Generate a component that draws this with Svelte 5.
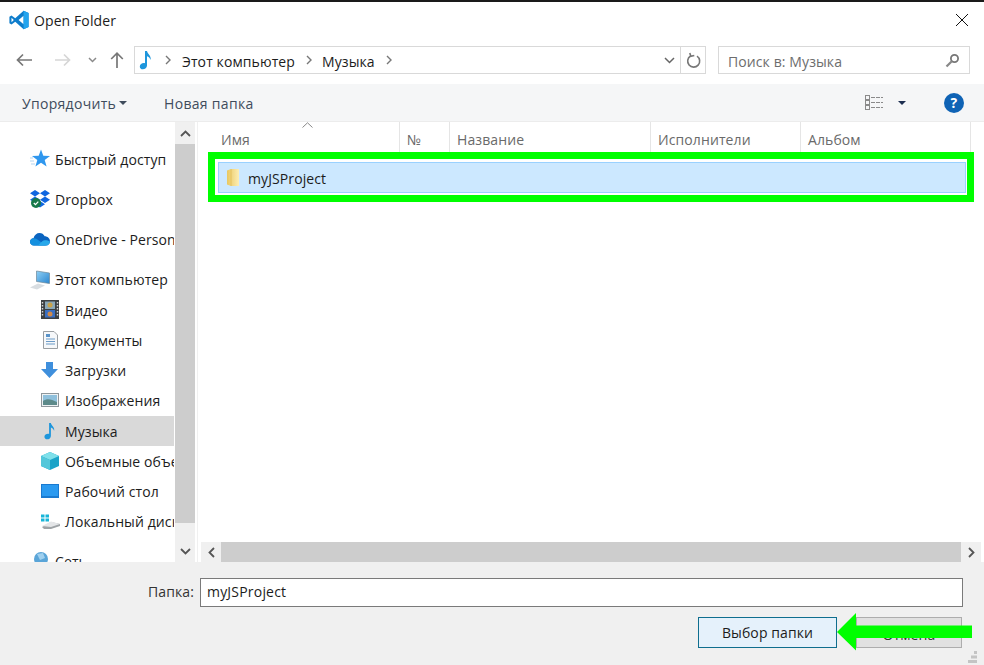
<script>
  const cols = [
    { name: 'Имя', w: 202 },
    { name: '№', w: 50 },
    { name: 'Название', w: 201 },
    { name: 'Исполнители', w: 150 },
    { name: 'Альбом', w: 170 }
  ];
</script>

{#snippet note(s)}
  <svg width={s} height={s} viewBox="0 0 20 20"><path d="M9 1h2c.4 3 4.6 4.6 3.6 9-.5-2-2-3.4-3.6-3.8V15.500c0 2.200-2 3.800-4.200 3.800C5 19.300 3.800 18 3.800 16.400c0-2 2-3.400 4-3.400.500 0 .900.100 1.200.200z" fill="#1e96dc"/></svg>
{/snippet}

<div class="window">
  <header class="title">
    <svg class="logo" width="20" height="20" viewBox="0 0 24 24"><path d="M17.500 0.800 23.500 3.700V20.300L17.500 23.200 7.500 14 3 17.500 0.500 16V8L3 6.500 7.500 10zM17.500 6.800 11.500 12 17.500 17.200z" fill="#0e7ccb"/><path d="M17.500 0.800 23.500 3.700V20.300L17.500 23.200z" fill="#23a4ee"/><path d="M3 9.300V14.700L5.800 12z" fill="#fff"/></svg>
    <span class="title-text">Open Folder</span>
    <svg class="close" width="14" height="14" viewBox="0 0 14 14"><path d="M1 1 13 13M13 1 1 13" stroke="#111" stroke-width="1" fill="none"/></svg>
  </header>

  <nav class="nav">
    <svg class="n-back" width="16" height="14" viewBox="0 0 16 14"><path d="M7 1.500 1.500 7 7 12.500M1.500 7H16" stroke="#777" stroke-width="1.700" fill="none"/></svg>
    <svg class="n-fwd" width="16" height="14" viewBox="0 0 16 14"><path d="M9 1.500 14.500 7 9 12.500M14.500 7H0" stroke="#d6d6d6" stroke-width="1.700" fill="none"/></svg>
    <svg class="n-down" width="9" height="6" viewBox="0 0 9 6"><path d="M1 1 4.500 4.500 8 1" stroke="#8a8a8a" stroke-width="1.500" fill="none"/></svg>
    <svg class="n-up" width="14" height="16" viewBox="0 0 14 16"><path d="M1.200 7 7 1.200 12.800 7M7 1.200V16" stroke="#777" stroke-width="1.700" fill="none"/></svg>
    <div class="address">
      <span class="addr-note">{@render note(20)}</span>
      <svg class="crumb first" width="7" height="10" viewBox="0 0 7 10"><path d="M1 1 5 5 1 9" stroke="#777" stroke-width="1.400" fill="none"/></svg>
      <span class="addr-text">Этот компьютер</span>
      <svg class="crumb" width="7" height="10" viewBox="0 0 7 10"><path d="M1 1 5 5 1 9" stroke="#777" stroke-width="1.400" fill="none"/></svg>
      <span class="addr-text">Музыка</span>
      <svg class="crumb" width="7" height="10" viewBox="0 0 7 10"><path d="M1 1 5 5 1 9" stroke="#777" stroke-width="1.400" fill="none"/></svg>
      <span class="spacer"></span>
      <svg class="addr-drop" width="11" height="7" viewBox="0 0 11 7"><path d="M1 1 5.500 5.500 10 1" stroke="#666" stroke-width="1.500" fill="none"/></svg>
      <span class="addr-refresh">
        <svg width="15" height="16" viewBox="0 0 15 16"><path d="M4.500 3.500A6 6 0 1 0 11 3.600M3.800 .5 4.800 3.800 8.300 3" stroke="#777" stroke-width="1.600" fill="none" transform="translate(0 .5)"/></svg>
      </span>
    </div>
    <div class="search">
      <span class="search-text">Поиск в: Музыка</span>
      <svg width="15" height="15" viewBox="0 0 15 15"><circle cx="9.500" cy="5.500" r="3.600" stroke="#777" stroke-width="1.800" fill="none"/><path d="M6.800 8.200 1.500 13.500" stroke="#888" stroke-width="2.200"/></svg>
    </div>
  </nav>

  <div class="toolbar">
    <span class="tool organize">Упорядочить</span>
    <span class="tri"></span>
    <span class="tool newf">Новая папка</span>
    <span class="spacer"></span>
    <svg class="views" width="19" height="15" viewBox="0 0 19 15"><g fill="none" stroke="#8a8a8a"><rect x=".5" y=".5" width="4" height="4"/><rect x=".5" y="5.500" width="4" height="4"/><rect x=".5" y="10.500" width="4" height="4"/></g><path d="M6 2.500h12M6 7.500h12M6 12.500h12" stroke="#8a8a8a" stroke-dasharray="4 1"/></svg>
    <span class="tri dark"></span>
    <span class="help">?</span>
  </div>

  <div class="main">
    <aside class="side">
      <div class="tree">
        <div class="row top">
          <svg width="20" height="20" viewBox="0 0 20 20"><path d="M11 .5 13.300 6.800 20 7 14.700 11 16.600 17.500 11 13.700 5.400 17.500 7.300 11 2 7 8.700 6.800z" fill="#2f97ee"/><path d="M0 9h3M0 12h4M1 15h4" stroke="#b5d5f0"/></svg>
          <span>Быстрый доступ</span>
        </div>
        <div class="row top">
          <svg width="20" height="20" viewBox="0 0 20 20"><path d="M5 1 10 4.300 5 7.500 0 4.300zM15 1 20 4.300 15 7.500 10 4.300zM5 7.500 10 10.800 5 14 0 10.800zM15 7.500 20 10.800 15 14 10 10.800zM5 15.200 10 12 15 15.200 10 18.400z" fill="#0f66e0"/><circle cx="6" cy="14" r="5" fill="#17794a"/><path d="M3.800 14 5.500 15.700 8.300 12.600" stroke="#fff" stroke-width="1.200" fill="none"/></svg>
          <span>Dropbox</span>
        </div>
        <div class="row top">
          <svg width="20" height="14" viewBox="0 0 20 14"><path d="M4 13.500C1.500 13.500 0 11.800 0 9.800 0 7.800 1.600 6.300 3.500 6.200 4.300 3 6.800 1 9.500 1c2.300 0 4.200 1.200 5.200 3.300C17.600 4.300 20 6.500 20 9.500c0 2.300-1.700 4-4 4z" fill="#0a64c0"/><path d="M4 13.500C1.500 13.500 0 11.800 0 9.800 0 7.800 1.600 6.300 3.500 6.200 5.500 6 7 7 8.500 8.300L16 13.500z" fill="#1490df"/><path d="M8 13.500 12 9.500c1.500-1.300 4.500-1.800 8 0 0 2.300-1.700 4-4 4z" fill="#28a8ea"/></svg>
          <span>OneDrive - Personal</span>
        </div>
        <div class="row top">
          <svg width="20" height="20" viewBox="0 0 20 20"><defs><linearGradient id="scr" x1="0" y1="0" x2="1" y2="1"><stop offset="0" stop-color="#8fd0f5"/><stop offset="1" stop-color="#2a86d0"/></linearGradient></defs><path d="M6.500 1 19.500 3V13.500L6.500 11.500z" fill="url(#scr)" stroke="#6d8798" stroke-width=".7"/><path d="M0 17.500 8 13.500 15 15.500 7 19.500z" fill="#d8dde1"/></svg>
          <span>Этот компьютер</span>
        </div>
        <div class="row sub">
          <svg width="18" height="19" viewBox="0 0 18 19"><rect width="18" height="19" fill="#3c3f42"/><rect x="4" y="1.500" width="10" height="7.500" fill="#8aa7b8"/><rect x="4" y="10" width="10" height="7.500" fill="#3a6fc2"/><circle cx="9" cy="5" r="2.500" fill="#c9a24a"/><circle cx="9" cy="14" r="2.500" fill="#d08a4a"/><path d="M1.500 2v15M16.500 2v15" stroke="#d5d5d5" stroke-width="1.400" stroke-dasharray="1.500 1.500"/></svg>
          <span>Видео</span>
        </div>
        <div class="row sub">
          <svg class="doc" width="15" height="18" viewBox="0 0 15 18"><path d="M.5.500H11L14.500 4V17.500H.5z" fill="#f6f8fa" stroke="#9a9fa3"/><path d="M3 8h9M3 10.500h9M3 13h9" stroke="#6b9bc8"/><path d="M3 3h4v3H3z" fill="#5a93c9"/></svg>
          <span>Документы</span>
        </div>
        <div class="row sub">
          <svg width="17" height="16" viewBox="0 0 17 16"><path d="M5 0H12V7H17L8.500 16 0 7H5z" fill="#3f8fdc"/></svg>
          <span>Загрузки</span>
        </div>
        <div class="row sub">
          <svg width="18" height="14" viewBox="0 0 18 14"><rect x=".5" y=".5" width="17" height="13" fill="#eef2f4" stroke="#8f979c"/><rect x="2" y="2" width="14" height="10" fill="#8fc0dc"/><path d="M2 8C6 5 10 6 16 9V12H2z" fill="#5d8a8a"/></svg>
          <span>Изображения</span>
        </div>
        <div class="row sub selected">
          <span class="row-note">{@render note(18)}</span>
          <span>Музыка</span>
        </div>
        <div class="row sub">
          <svg width="18" height="18" viewBox="0 0 18 18"><path d="M9 0 18 4V14L9 18 0 14V4z" fill="#1aa3c8"/><path d="M9 0 18 4 9 8 0 4z" fill="#7fe0ea"/><path d="M9 8V18L0 14V4z" fill="#52c7da"/></svg>
          <span>Объемные объекты</span>
        </div>
        <div class="row sub">
          <svg width="18" height="14" viewBox="0 0 18 14"><rect width="18" height="14" fill="#1a7ad0"/><rect x="1" y="1" width="16" height="11" fill="#2b9af0"/></svg>
          <span>Рабочий стол</span>
        </div>
        <div class="row sub">
          <svg width="19" height="15" viewBox="0 0 19 15"><path d="M0 .5h3.500v3H0zM4.500.5H8v3H4.500zM0 4.500h3.500v3H0zM4.500 4.500H8v3H4.500z" fill="#18b5d8"/><path d="M1 13 10 8 19 10V12L10 15H3z" fill="#9ea3a6"/><path d="M1 12 10 7.500 19 10 10 13z" fill="#e4e6e8"/></svg>
          <span>Локальный диск (C:)</span>
        </div>
        <div class="row top last">
          <svg width="20" height="20" viewBox="0 0 20 20"><circle cx="11" cy="8" r="7" fill="#5aa5d8"/><path d="M7 3 13 2 15 7 10 9z" fill="#9fd0ef"/><rect x="0" y="12" width="8" height="6" fill="#8a98a3"/></svg>
          <span>Сеть</span>
        </div>
      </div>
    </aside>

    <div class="vscroll">
      <div class="sbtn"><svg width="11" height="7" viewBox="0 0 11 7"><path d="M1 6 5.500 1.500 10 6" stroke="#555" stroke-width="1.800" fill="none"/></svg></div>
      <div class="vthumb"></div>
      <div class="vtrack"></div>
      <div class="sbtn"><svg width="11" height="7" viewBox="0 0 11 7"><path d="M1 1 5.500 5.500 10 1" stroke="#555" stroke-width="1.800" fill="none"/></svg></div>
    </div>

    <section class="files">
      <div class="head">
        {#each cols as c}
          <div class="col" style="width:{c.w}px">{c.name}</div>
        {/each}
        <svg class="sort" width="11" height="6" viewBox="0 0 11 6"><path d="M.5 5.500 5.500 .8 10.500 5.500" stroke="#888" fill="none"/></svg>
      </div>
      <div class="list">
        <div class="item">
          <svg width="12" height="17" viewBox="0 0 12 17"><defs><linearGradient id="fold" x1="0" y1="0" x2="1" y2="0"><stop offset="0" stop-color="#e9c75f"/><stop offset="1" stop-color="#fdeeb4"/></linearGradient></defs><path d="M0 1.500 4 0H12V17H4L0 15.500z" fill="url(#fold)"/><path d="M4 0V17" stroke="#e2bd58" stroke-width=".8"/></svg>
          <span>myJSProject</span>
        </div>
      </div>
      <div class="hscroll">
        <div class="hbtn"><svg width="7" height="11" viewBox="0 0 7 11"><path d="M6 1 1.500 5.500 6 10" stroke="#555" stroke-width="1.800" fill="none"/></svg></div>
        <div class="hthumb"></div>
        <div class="hbtn"><svg width="7" height="11" viewBox="0 0 7 11"><path d="M1 1 5.500 5.500 1 10" stroke="#555" stroke-width="1.800" fill="none"/></svg></div>
      </div>
    </section>
  </div>

  <footer class="footer">
    <div class="field">
      <label for="folder">Папка:</label>
      <input id="folder" value="myJSProject" />
    </div>
    <div class="buttons">
      <button class="btn primary">Выбор папки</button>
      <button class="btn cancel">Отмена</button>
    </div>
    <svg class="grip" width="9" height="12" viewBox="0 0 9 12"><path d="M6 0h3v3H6zM3 4.500h3v3H3zM6 4.500h3v3H6zM0 9h3v3H0zM3 9h3v3H3zM6 9h3v3H6z" fill="#c4c4c4"/></svg>
  </footer>

  <div class="highlight"></div>
  <svg class="arrow" width="136" height="38" viewBox="0 0 136 38"><path d="M0 19 19 0V12.500H135V25H19V37.500z" fill="#00ff00"/></svg>
</div>

<style>
  :global(body) {
    margin: 0;
    background: #fff;
  }
  .window {
    position: relative;
    width: 984px;
    height: 665px;
    box-sizing: border-box;
    border-top: 2px solid #1a1a1a;
    display: flex;
    flex-direction: column;
    overflow: hidden;
    font-family: "Open Sans", "Noto Sans", sans-serif;
    font-size: 14px;
    letter-spacing: .1px;
    color: #1c1c1c;
    background: #fff;
  }
  .title {
    height: 36px;
    flex: none;
    display: flex;
    align-items: center;
    padding: 0 15px 0 9px;
  }
  .title-text {
    margin-left: 5px;
    flex: 1;
  }
  .nav {
    height: 46px;
    flex: none;
    display: flex;
    align-items: center;
    padding-bottom: 2px;
    box-sizing: border-box;
  }
  .n-back { margin-left: 16px; }
  .n-fwd { margin-left: 23px; }
  .n-down { margin-left: 17px; }
  .n-up { margin-left: 13px; }
  .address {
    margin-left: 10px;
    width: 572px;
    height: 28px;
    box-sizing: border-box;
    border: 1px solid #d9d9d9;
    display: flex;
    align-items: center;
  }
  .addr-note { display: flex; margin-left: 1px; }
  .crumb { margin: 0 9px 0 11px; }
  .crumb.first { margin: 0 10px 0 9px; }
  .addr-text { white-space: nowrap; padding-top: 2px; }
  .spacer { flex: 1; }
  .addr-drop { margin-right: 1px; }
  .addr-refresh {
    width: 24px;
    height: 100%;
    margin-left: 4px;
    border-left: 1px solid #d9d9d9;
    display: flex;
    align-items: center;
    justify-content: center;
  }
  .search {
    margin-left: 12px;
    width: 252px;
    height: 28px;
    box-sizing: border-box;
    border: 1px solid #d9d9d9;
    display: flex;
    align-items: center;
    justify-content: space-between;
    padding: 0 9px;
    color: #6d6d6d;
  }
  .search-text { padding-top: 2px; }
  .toolbar {
    height: 38px;
    flex: none;
    display: flex;
    align-items: center;
    background: #f5f6f7;
    border-bottom: 1px solid #ececec;
    box-sizing: border-box;
    padding: 0 20px 0 22px;
    color: #3f4c5c;
  }
  .tool {
    padding-top: 2px;
    letter-spacing: .3px;
  }
  .tri {
    width: 0;
    height: 0;
    margin-left: 3px;
    border: 4px solid transparent;
    border-top: 4px solid #3f4c5c;
    border-bottom: 0;
  }
  .tri.dark {
    border-top-color: #1d2e50;
    margin: 0 38px 0 14px;
  }
  .newf { margin-left: 37px; }
  .help {
    width: 20px;
    height: 20px;
    border-radius: 50%;
    background: #0f63b5;
    color: #fff;
    font-weight: 700;
    font-size: 14px;
    line-height: 20px;
    text-align: center;
  }
  .main {
    height: 440px;
    flex: none;
    display: flex;
    overflow: hidden;
  }
  .side {
    width: 174px;
    flex: none;
    overflow: hidden;
  }
  .tree { padding-top: 22px; }
  .row {
    height: 30.2px;
    display: flex;
    align-items: center;
    white-space: nowrap;
    position: relative;
  }
  .row.top {
    padding-left: 30px;
    margin-bottom: 10px;
  }
  .row.top > span { position: absolute; left: 55px; }
  .row.top:nth-child(4) { margin-bottom: 0; }
  .row.sub { padding-left: 41px; }
  .row.sub > span:last-child { position: absolute; left: 65px; padding-top: 1px; }
  .row.sub:nth-child(12) { margin-bottom: 10px; }
  .row.selected { background: #d9d9d9; }
  .row-note { display: flex; }
  .doc { margin-left: 2px; }
  .vscroll {
    width: 20px;
    margin-left: 1px;
    flex: none;
    display: flex;
    flex-direction: column;
    background: #f0f0f0;
  }
  .sbtn {
    height: 22px;
    flex: none;
    display: flex;
    align-items: center;
    justify-content: center;
  }
  .vthumb {
    height: 379px;
    flex: none;
    background: #cdcdcd;
  }
  .vtrack { flex: 1; }
  .files {
    flex: 1;
    min-width: 0;
    margin-left: 2px;
    display: flex;
    flex-direction: column;
    border-left: 1px solid #f0f0f0;
  }
  .head {
    position: relative;
    height: 30px;
    flex: none;
    display: flex;
    color: #6a6a6a;
  }
  .col {
    box-sizing: border-box;
    border-right: 1px solid #e5e5e5;
    padding: 8px 0 0 7px;
    flex: none;
    white-space: nowrap;
  }
  .col:first-child { padding-left: 23px; }
  .sort {
    position: absolute;
    left: 104px;
    top: 0;
  }
  .list {
    flex: 1;
    padding: 10px 0 0 20px;
  }
  .item {
    width: 748px;
    height: 31px;
    box-sizing: border-box;
    background: #cce8ff;
    border: 1px solid #99d1ff;
    display: flex;
    align-items: center;
    padding-left: 8px;
  }
  .item span { margin-left: 9px; padding-top: 2px; }
  .hscroll {
    height: 20px;
    margin: 0 3px 0 3px;
    flex: none;
    display: flex;
    background: #f0f0f0;
  }
  .hbtn {
    width: 20px;
    flex: none;
    display: flex;
    align-items: center;
    justify-content: center;
  }
  .hthumb {
    flex: 1;
    background: #cdcdcd;
  }
  .footer {
    flex: 1;
    position: relative;
    background: #f0f0f0;
    padding-top: 16px;
    box-sizing: border-box;
  }
  .field {
    display: flex;
    align-items: center;
    justify-content: flex-end;
    padding-right: 21px;
  }
  .field label { margin-right: 6px; padding-bottom: 2px; color: #333; }
  .field input {
    width: 763px;
    height: 29px;
    box-sizing: border-box;
    border: 1px solid #7a7a7a;
    background: #fff;
    padding: 0 6px 2px;
    font: inherit;
    letter-spacing: .2px;
    color: #1c1c1c;
    outline: none;
  }
  .buttons {
    display: flex;
    justify-content: flex-end;
    gap: 19px;
    margin-top: 10px;
    padding-right: 22px;
  }
  .btn {
    height: 31px;
    box-sizing: border-box;
    font: inherit;
    letter-spacing: inherit;
    padding: 0;
  }
  .primary {
    width: 139px;
    background: #e5f1fb;
    border: 1px solid #0f6e8e;
    color: #1c1c1c;
  }
  .cancel {
    width: 106px;
    padding-top: 3px;
    background: #e1e1e1;
    border: 1px solid #adadad;
    color: #333;
  }
  .grip {
    position: absolute;
    right: 7px;
    bottom: 2px;
  }
  .highlight {
    position: absolute;
    left: 208px;
    top: 150px;
    width: 766px;
    height: 50px;
    box-sizing: border-box;
    border: 7px solid #00ff00;
    pointer-events: none;
  }
  .arrow {
    position: absolute;
    left: 837px;
    top: 611px;
  }
</style>
